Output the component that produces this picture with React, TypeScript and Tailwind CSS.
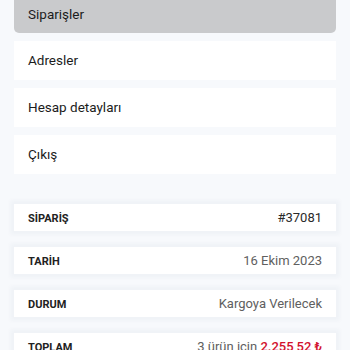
import React from 'react';

const menu = ['Siparişler', 'Adresler', 'Hesap detayları', 'Çıkış'];

function OrderRow({ label, children }: { label: string; children: React.ReactNode }) {
  return (
    <div className="flex h-[27px] items-center justify-between bg-white px-[14px] shadow-[0_0_4px_4px_rgba(30,50,90,0.03)]">
      <span className="pt-[3px] text-[11px] font-bold text-[#222]">{label}</span>
      <span className="text-[13px] text-[#606060]">{children}</span>
    </div>
  );
}

export default function App() {
  return (
    <div
      className="h-[350px] w-[350px] overflow-hidden bg-[#f7f9fc] px-[14px]"
      style={{ fontFamily: 'Roboto, "Noto Sans", sans-serif' }}
    >
      <nav className="flex flex-col gap-[8px]">
        {menu.map((item, i) => (
          <div
            key={item}
            className={
              i === 0
                ? 'flex h-[33px] items-center rounded-b-[5px] bg-[#c9cacc] px-[14px] pb-[4px] text-[13.5px] text-[#1c1c1c]'
                : 'flex h-[39px] items-center bg-white px-[14px] text-[13.5px] text-[#1c1c1c]'
            }
          >
            {item}
          </div>
        ))}
      </nav>

      <div className="mt-[30px] flex flex-col gap-[16px]">
        <OrderRow label="SİPARİŞ">
          <span className="text-[#2a2a2a]">#37081</span>
        </OrderRow>
        <OrderRow label="TARİH">16 Ekim 2023</OrderRow>
        <OrderRow label="DURUM">Kargoya Verilecek</OrderRow>
        <OrderRow label="TOPLAM">
          3 ürün için <span className="font-medium text-[#d2122e]">2.255,52 ₺</span>
        </OrderRow>
      </div>
    </div>
  );
}
